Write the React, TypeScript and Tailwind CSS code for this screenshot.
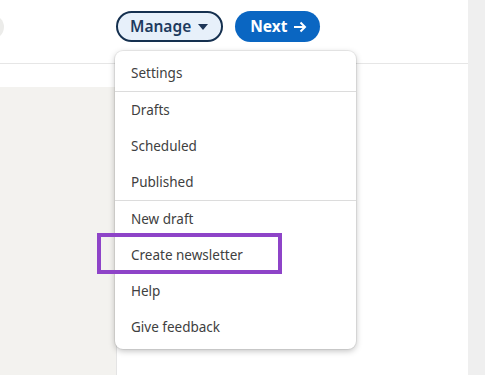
const groups = [
  ["Settings"],
  ["Drafts", "Scheduled", "Published"],
  ["New draft", "Create newsletter", "Help", "Give feedback"],
];

function Caret() {
  return (
    <svg width="10" height="6" viewBox="0 0 10 6" className="ml-[7px]">
      <path d="M0 0h10L5 6z" fill="#1d3557" />
    </svg>
  );
}

function Arrow() {
  return (
    <svg width="14" height="12" viewBox="0 0 14 12" className="ml-[6px]">
      <path d="M1 6h11M7.5 1.5 12 6l-4.5 4.5" stroke="#fff" strokeWidth="2" fill="none" />
    </svg>
  );
}

export default function App() {
  return (
    <div
      className="relative flex h-[375px] w-[485px] overflow-hidden bg-white"
      style={{ fontFamily: '"Noto Sans", "Open Sans", sans-serif' }}
    >
      <div className="flex flex-1 flex-col">
        <div className="flex h-[64px] items-start border-b border-[#e6e6e6] pt-[11px]">
          <div className="-ml-[36px] mt-[4px] h-[24px] w-[40px] rounded-full bg-[#ececea]" />
          <div className="ml-[112px] flex items-center gap-[12px]">
            <button className="flex h-[31px] items-center rounded-full border-2 border-[#15304f] bg-[#e7f0fa] pl-[12px] pr-[13px] text-[15.5px] font-semibold text-[#1d3a5e]">
              Manage
              <Caret />
            </button>
            <button className="flex h-[31px] items-center rounded-full bg-[#0a66c2] pl-[15px] pr-[13px] text-[15.5px] font-bold text-white">
              Next
              <Arrow />
            </button>
          </div>
        </div>
        <div className="h-[23px]" />
        <div className="flex flex-1">
          <div className="w-[116px] bg-[#f3f2ef]" />
          <div className="flex-1 border-l border-[#e4e4e4]" />
        </div>
      </div>
      <div className="w-[17px] bg-[#efefef]" />

      <div className="absolute left-[115px] top-[51px] w-[241px] rounded-[8px] bg-white py-[4px] shadow-[0_2px_6px_rgba(0,0,0,0.25),0_0_0_1px_rgba(0,0,0,0.06)]">
        {groups.map((g, i) => (
          <div key={i} className={i > 0 ? "border-t border-[#dcdcdc]" : ""}>
            {g.map((item) => (
              <div key={item} className="flex h-[36px] items-center pl-[16px] text-[13.5px] text-[#404040]">
                {item}
              </div>
            ))}
          </div>
        ))}
      </div>

      <div className="absolute left-[97px] top-[233px] h-[41px] w-[185px] border-[4px] border-[#8e44c8]" />
    </div>
  );
}
